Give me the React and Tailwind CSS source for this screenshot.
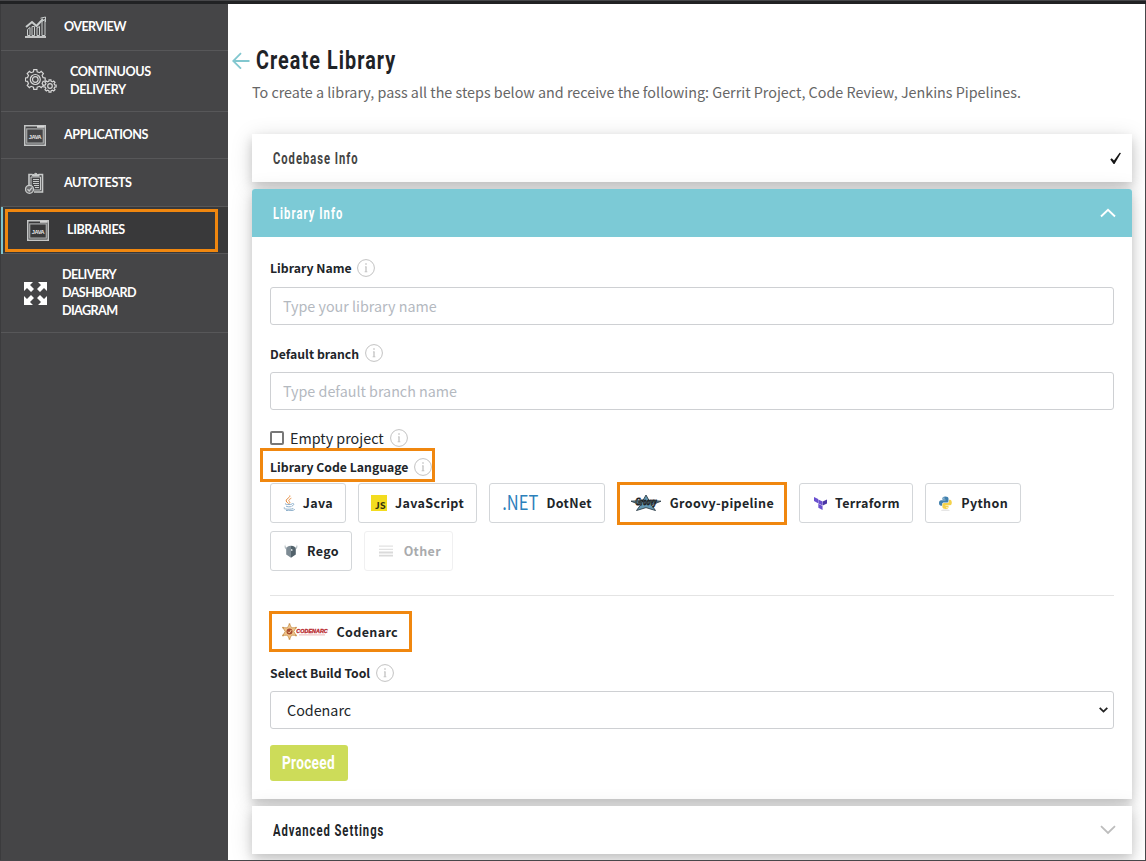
import React from "react";

const SANS = "font-['Noto_Sans_CJK_SC','Noto_Sans',sans-serif]";
const CARD = "shadow-[0_5px_10px_rgba(0,0,0,0.15),0_4px_22px_rgba(0,0,0,0.15)]";

function gearPath(cx, cy, inner, outer, teeth) {
  const pts = [];
  const step = (Math.PI * 2) / teeth;
  for (let i = 0; i < teeth; i++) {
    const a = i * step;
    [[-0.3, inner], [-0.2, outer], [0.2, outer], [0.3, inner]].forEach(([f, r]) => {
      pts.push(`${(cx + Math.cos(a + f * step) * r).toFixed(2)} ${(cy + Math.sin(a + f * step) * r).toFixed(2)}`);
    });
  }
  return `M${pts.join("L")}Z`;
}

function ChartIcon() {
  return (
    <svg width="22" height="22" viewBox="0 0 22 22" fill="none" stroke="#c9cdcd" strokeWidth="1">
      <path d="M0 21H21" strokeWidth="1.6" stroke="#e2e4e4" />
      <path d="M2.5 19.5V13.5L5 11.5V19.5ZM7 19.5V10.5L9.5 10.5V19.5ZM12 19.5V12L14.5 10.5V19.5ZM17 19.5V5.5L20 3.5V19.5Z" />
      <path d="M1 11L7 6L11.5 10L18 3" strokeWidth="2" />
      <path d="M15.5 2.2L20.5 1V6" />
    </svg>
  );
}

function GearsIcon() {
  return (
    <svg width="32" height="24" viewBox="0 0 32 24" fill="none" stroke="#d6d6d6" strokeWidth="1.2">
      <path d={gearPath(10.3, 10.5, 8, 10, 8)} />
      <circle cx="10.3" cy="10.5" r="5" />
      <circle cx="10.3" cy="10.5" r="2.8" />
      <path d={gearPath(25, 17, 4.8, 6.2, 8)} />
      <circle cx="25" cy="17" r="2.3" />
    </svg>
  );
}

function JavaWindowIcon() {
  return (
    <svg width="22" height="21" viewBox="0 0 22 21">
      <rect x="0.75" y="0.75" width="20.5" height="19.5" fill="none" stroke="#c4c6c6" strokeWidth="1.5" />
      <path d="M13 1.8H20.5" stroke="#d6d6d6" strokeWidth="2" />
      <rect x="2.7" y="3.9" width="16.6" height="14.2" fill="none" stroke="#a9abab" strokeWidth="1.2" />
      <text x="11" y="14" textAnchor="middle" fontSize="5.6" fontWeight="700" fontFamily="Liberation Sans" fill="#e4e4e4">JAVA</text>
    </svg>
  );
}

function ClipboardIcon() {
  return (
    <svg width="19" height="22" viewBox="0 0 19 22" fill="none" stroke="#c8caca">
      <path d="M7.5 2.5H4V14M13.5 2.5H17.5V20H9" strokeWidth="1.6" />
      <path d="M6 17V5H15.5V18H9" />
      <path d="M7.5 4V2.5H9.2A1.6 1.6 0 0 1 12.3 2.5H14V4Z" fill="#c8caca" />
      <path d="M8 7.5H14M8 9.5H14M8 11.5H14M9 13.5H14M10 15.5H14" />
      <circle cx="4.5" cy="17.3" r="4" fill="#69696b" strokeWidth="1.3" />
      <path d="M2.5 17.3L4.2 18.9L7 15.6" strokeWidth="1.4" />
    </svg>
  );
}

function ExpandIcon() {
  return (
    <svg width="23" height="23" viewBox="0 0 23 23" fill="#fff">
      <path d="M0 0H9L6 3L10 7L7 10L3 6L0 9ZM23 0V9L20 6L16 10L13 7L17 3L14 0ZM0 23V14L3 17L7 13L10 16L6 20L9 23ZM23 23H14L17 20L13 16L16 13L20 17L23 14Z" />
    </svg>
  );
}

function Info({ className = "" }) {
  return (
    <svg className={`shrink-0 ${className}`} width="18" height="18" viewBox="0 0 18 18" fill="none" stroke="#c2c2c2">
      <circle cx="9" cy="9" r="8.4" strokeWidth="1" />
      <path d="M9 7.5V13" strokeWidth="1.3" />
      <path d="M8.2 7.8H9.3M7.6 12.8H10.4" strokeWidth="0.8" />
      <path d="M8.3 5H9.7" strokeWidth="1.4" />
    </svg>
  );
}

function JavaLogo() {
  return (
    <svg width="12" height="16" viewBox="0 0 12 16" fill="none">
      <path d="M6.8 0.5C8 3-1 4.5 5.6 8.5M8.3 3.2C5.5 4.8 5.2 5.5 6.5 6.8C7.3 7.7 6.5 8.2 6 8.6" stroke="#e58a3c" />
      <path d="M2.8 8.5C0.5 9.5 7 10 9 9M9.3 8.5C11.5 8 11 10.5 9 11M3 11C3.5 12 7.5 12 8.5 11.4M1.5 12.5C-1.5 14 7 15 10.3 13.5M3 15.4C6 16 10.5 15.8 11.8 14.4" stroke="#7fa5c4" strokeWidth="0.9" />
    </svg>
  );
}

function JsLogo() {
  return (
    <svg width="16" height="16" viewBox="0 0 16 16">
      <path d="M0 0H16V16H0Z" fill="#f3dc1f" />
      <text x="4.3" y="14.4" fontSize="9.8" fontWeight="900" textLength="10.7" lengthAdjust="spacingAndGlyphs" fontFamily="Lato" fill="#35340f">JS</text>
    </svg>
  );
}

function DotNetLogo() {
  return (
    <svg className="overflow-visible" width="37" height="20" viewBox="0 0 37 20">
      <text x="0.3" y="16.7" fontSize="19.5" fontWeight="400" letterSpacing="0" textLength="36" lengthAdjust="spacingAndGlyphs" fontFamily="Noto Sans CJK SC" fill="#2b80bb">.NET</text>
    </svg>
  );
}

function GroovyLogo() {
  return (
    <svg className="overflow-visible" width="30" height="16" viewBox="0 0 30 16">
      <path d="M15 0L18 5.4L30 6.2L20.5 10L24.5 15.5L15 12.6L5.5 15.5L9.5 10L0 6.2L12 5.4Z" fill="#6398b3" stroke="#2f3d46" strokeWidth="0.9" />
      <text x="4.5" y="10" fontSize="10" fontWeight="700" fontStyle="italic" letterSpacing="0" textLength="21" lengthAdjust="spacingAndGlyphs" fontFamily="Liberation Serif" fill="#a9c3cf" stroke="#1d2327" strokeWidth="1">Groovy</text>
    </svg>
  );
}

function TerraformLogo() {
  return (
    <svg width="13" height="13" viewBox="0 0 12 13" preserveAspectRatio="none">
      <path d="M0 0L3.8 2.1V6.2L0 4Z" fill="#6a50cf" />
      <path d="M4 2.4L7.9 4.5V8.6L4 6.4Z" fill="#6a50cf" />
      <path d="M8.1 4.5L12 2.4V6.4L8.1 8.6Z" fill="#4b36a5" />
      <path d="M4 6.7L7.9 8.9V13L4 10.8Z" fill="#6a50cf" />
    </svg>
  );
}

function PythonLogo() {
  return (
    <svg width="13" height="15" viewBox="0 0 13 15">
      <path d="M6.3 0.5C4 0.5 3.4 1.5 3.4 2.6V3.7H6.5V4.3H2.1C0.8 4.3 0 5.4 0 7.1S0.9 9.8 2 9.8H3.1V8.3C3.1 7.1 4 6.5 5 6.5H8C9 6.5 9.5 5.7 9.5 4.9V2.6C9.5 1.2 8.4 0.5 6.3 0.5Z" fill="#4080ae" />
      <path d="M6.7 13C9 13 9.5 12 9.5 11V9.8H6.4V9.2H11C12.3 9.2 12.8 8 12.8 6.5S12 3.8 11 3.8H10V5.2C10 6.4 9 7 8 7H5C4 7 3.4 7.8 3.4 8.6V11C3.4 12.3 4.6 13 6.7 13Z" fill="#f4d24b" />
      <circle cx="4.9" cy="2.1" r="0.6" fill="#fff" />
      <circle cx="8" cy="11.4" r="0.6" fill="#fff" />
      <ellipse cx="6.4" cy="14.2" rx="4.5" ry="0.6" fill="#dedede" />
    </svg>
  );
}

function RegoLogo() {
  return (
    <svg width="14" height="14" viewBox="0 0 14 14">
      <path d="M1.2 0.5C0.2 2 0.2 4.2 2.3 5.6L3.5 3.7C1.8 3.2 1.1 2 1.2 0.5ZM12.8 0.5C13.8 2 13.8 4.2 11.7 5.6L10.5 3.7C12.2 3.2 12.9 2 12.8 0.5Z" fill="#b9c1c5" />
      <path d="M7 1.7C4 1.7 2.2 3 2.2 5.6V10.6L7 13.8Z" fill="#7d8b94" />
      <path d="M7 1.7C10 1.7 11.8 3 11.8 5.6V10.6L7 13.8Z" fill="#52626b" />
      <path d="M7 5L8.4 5.3V7L7 6.7Z" fill="#dfe5e7" />
    </svg>
  );
}

function OtherLogo() {
  return (
    <svg width="14" height="13" viewBox="0 0 14 13">
      <path d="M0 1.2H14M0 4.4H14" stroke="#e2e2e2" strokeWidth="1.2" />
      <path d="M0 7.5H14M0 10.6H14" stroke="#dadada" strokeWidth="1.8" />
    </svg>
  );
}

function CodenarcLogo() {
  return (
    <svg className="overflow-visible" width="48" height="17" viewBox="0 0 48 17">
      <path d="M7.5 1L9.6 4.8L14 4.7L11.8 8.5L14 12.3L9.6 12.2L7.5 16L5.4 12.2L1 12.3L3.2 8.5L1 4.7L5.4 4.8Z" fill="#efc58c" stroke="#c9924e" strokeWidth="0.8" />
      <g fill="#c9924e">
        <circle cx="7.5" cy="1.1" r="0.9" />
        <circle cx="1" cy="4.6" r="0.9" />
        <circle cx="1" cy="12.4" r="0.9" />
        <circle cx="14" cy="4.6" r="0.9" />
        <circle cx="14" cy="12.4" r="0.9" />
        <circle cx="7.5" cy="15.9" r="0.9" />
      </g>
      <circle cx="7.5" cy="8.5" r="3" fill="#a64a2e" />
      <path d="M6 8.6L7.3 10L9.3 7" fill="none" stroke="#f1cf9a" />
      <text x="14.3" y="10.2" fontSize="5.6" fontWeight="700" fontStyle="italic" letterSpacing="0" textLength="31.5" lengthAdjust="spacingAndGlyphs" fontFamily="Liberation Sans" fill="#b8272c" stroke="#b8272c" strokeWidth="0.3">CODENARC</text>
      <path d="M17 11.9H43" stroke="#e9a3a3" strokeWidth="0.8" />
    </svg>
  );
}

function NavItem({ icon, label, className }) {
  return (
    <div className={`flex w-full items-center border-b border-[#575759] ${className}`}>
      {icon}
      <div className="whitespace-pre-line">{label}</div>
    </div>
  );
}

function Heading({ children, className }) {
  return (
    <span className={`inline-block origin-left whitespace-nowrap font-['Roboto',sans-serif] font-bold ${className}`}>{children}</span>
  );
}

function Tile({ icon, label, className }) {
  return (
    <div className={`flex h-10 items-center rounded-[3px] border border-[#d3d6d9] bg-white text-[12.5px] leading-5 font-bold tracking-[0.35px] text-[#212529] ${className}`}>
      {icon}
      <span className="-mt-px ml-auto whitespace-nowrap">{label}</span>
    </div>
  );
}

export default function App() {
  return (
    <div className={`flex h-[861px] w-[1146px] flex-col overflow-hidden border-b border-[#47474a] bg-white ${SANS}`}>
      <div className="h-1 shrink-0 border-t border-[#47474a] bg-[#212224]" />
      <div className="flex min-h-0 grow">
        <aside className="w-[228px] shrink-0 border-l border-[#3b3b3d] bg-[#454547] font-['Lato',sans-serif] text-[12.6px] leading-[18px] font-bold tracking-[-0.6px] text-white">
          <NavItem className="h-[47px] gap-[17px] pl-6" icon={<ChartIcon />} label="OVERVIEW" />
          <NavItem className="h-[61px] gap-[13px] pl-6 tracking-[-0.4px]" icon={<GearsIcon />} label={"CONTINUOUS\nDELIVERY"} />
          <NavItem className="h-[47px] gap-[18px] pl-[23px] tracking-[-0.4px]" icon={<JavaWindowIcon />} label="APPLICATIONS" />
          <NavItem className="h-12 gap-[20px] pl-[24px] tracking-[-0.4px]" icon={<ClipboardIcon />} label="AUTOTESTS" />
          <div className="relative">
            <NavItem className="h-[47px] gap-[18px] bg-[#39393a] pl-[26px] tracking-[-0.4px]" icon={<JavaWindowIcon />} label="LIBRARIES" />
            <div className="absolute top-0 left-0 h-[47px] w-[2px] bg-[#7fc5ce]" />
            <div className="absolute top-[2px] left-1 h-[43px] w-[213px] border-3 border-[#f0870f]" />
          </div>
          <NavItem className="h-[79px] gap-[15px] pl-[23px]" icon={<ExpandIcon />} label={"DELIVERY\nDASHBOARD\nDIAGRAM"} />
        </aside>

        <main className="flex w-[918px] shrink-0 flex-col overflow-hidden border-r border-[#47474a] pr-[13px] pl-6">
          <div className="-ml-5 mt-[38px] flex h-9 items-center">
            <svg width="18" height="18" viewBox="0 0 18 18" fill="none" stroke="#82c7cf" strokeWidth="1.8">
              <path d="M17.5 10H1.5M9 2.2L1.2 10L9 17.7" />
            </svg>
            <Heading className="ml-[6px] scale-x-[0.76] text-[26px] leading-9 tracking-[1.4px] text-[#1f2327]">Create Library</Heading>
          </div>
          <p className="mt-[2px] h-6 text-[14.33px] leading-6 whitespace-nowrap text-[#666]">
            To create a library, pass all the steps below and receive the following: Gerrit Project, Code Review, Jenkins Pipelines.
          </p>

          <section className={`mt-[30px] flex h-12 shrink-0 items-center justify-between bg-white pr-[10px] pl-[21px] ${CARD}`}>
            <Heading className="mt-[2px] scale-x-[0.7] text-[16px] leading-5 tracking-[1.4px] text-[#444]">Codebase Info</Heading>
            <svg width="13" height="13" viewBox="0 0 13 13">
              <path d="M1.3 7.5L2.7 6.2L5 8.6L10.6 0.8L12 1L5.5 12H4.6Z" fill="#151515" />
            </svg>
          </section>

          <section className={`mt-[7px] flex h-[610px] shrink-0 flex-col rounded-t-[3px] bg-white ${CARD}`}>
            <div className="flex h-12 shrink-0 items-center justify-between rounded-t-[3px] bg-[#7ccad6] pr-4 pl-[21px]">
              <Heading className="mt-[2px] scale-x-[0.7] text-[16px] leading-5 tracking-[1.5px] text-white">Library Info</Heading>
              <svg width="16" height="10" viewBox="0 0 16 10" fill="none" stroke="#fff" strokeWidth="1.9">
                <path d="M1 8.5L8 1.8L15 8.5" />
              </svg>
            </div>
            <div className="flex flex-col px-[18px] pt-[21px] text-[#212529]">
              <div className="flex h-5 items-center text-[12.25px] leading-5 font-bold">
                <span className="w-[87px] whitespace-nowrap">Library Name</span>
                <Info />
              </div>
              <div className="mt-[9px] flex h-[38px] items-center rounded-[3px] border border-[#ced0d3] px-3 text-[14.32px] leading-6 text-[#b4b9bf]">Type your library name</div>
              <div className="mt-[18px] flex h-5 items-center text-[12.25px] leading-5 font-bold">
                <span className="mt-[2px] w-[95px] whitespace-nowrap">Default branch</span>
                <Info />
              </div>
              <div className="mt-[9px] flex h-[38px] items-center rounded-[3px] border border-[#ced0d3] px-3 text-[14.32px] leading-6 text-[#b4b9bf]">Type default branch name</div>
              <div className="mt-[18px] flex h-5 items-center text-[14.32px]">
                <div className="mr-[6px] size-[14px] rounded-[2px] border-2 border-[#777]" />
                <span className="w-[100px] leading-5 whitespace-nowrap">Empty project</span>
                <Info />
              </div>
              <div className="relative mt-[9px] flex h-5 items-center text-[12.25px] leading-5 font-bold">
                <span className="w-[144px] whitespace-nowrap">Library Code Language</span>
                <Info />
                <div className="absolute -top-[9px] -left-[10px] h-[34px] w-[175px] border-3 border-[#f0870f]" />
              </div>
              <div className="mt-[6px] flex flex-wrap gap-x-3 gap-y-2">
                <Tile className="w-[76px] px-3" icon={<JavaLogo />} label="Java" />
                <Tile className="w-[119px] px-3" icon={<JsLogo />} label="JavaScript" />
                <Tile className="w-[116px] px-3" icon={<DotNetLogo />} label="DotNet" />
                <div className="relative w-[170px]">
                  <Tile className="w-[170px] pr-3 pl-[13px]" icon={<GroovyLogo />} label="Groovy-pipeline" />
                  <div className="absolute -top-[1px] left-0 h-[43px] w-[170px] border-3 border-[#f0870f]" />
                </div>
                <Tile className="w-[114px] pr-3 pl-[14px]" icon={<TerraformLogo />} label="Terraform" />
                <Tile className="w-[96px] pr-3 pl-[13px]" icon={<PythonLogo />} label="Python" />
                <Tile className="w-[82px] pr-3 pl-[13px]" icon={<RegoLogo />} label="Rego" />
                <Tile className="w-[89px] border-[#f0f0f1] pr-[11px] pl-[14px] !text-[#a9abad]" icon={<OtherLogo />} label="Other" />
              </div>
              <div className="mt-6 h-px bg-[#e4e4e4]" />
              <div className="mt-[15px] -ml-px flex h-[41px] w-[143px] items-center border-3 border-[#f0870f] pr-[11px] pl-[10px] text-[12.5px] leading-5 font-bold tracking-[0.35px]">
                <CodenarcLogo />
                <span className="ml-auto whitespace-nowrap">Codenarc</span>
              </div>
              <div className="mt-[11px] flex h-5 items-center text-[12.25px] leading-5 font-bold">
                <span className="w-[106px] whitespace-nowrap">Select Build Tool</span>
                <Info />
              </div>
              <div className="mt-2 flex h-[38px] items-center justify-between rounded-[3px] border border-[#ced0d3] pr-[5px] pl-4 text-[14.32px] leading-6">
                <span>Codenarc</span>
                <svg width="9" height="6" viewBox="0 0 9 6" fill="none" stroke="#222" strokeWidth="1.8">
                  <path d="M0.7 0.8L4.5 4.6L8.3 0.8" />
                </svg>
              </div>
              <div className="mt-4 flex h-9 w-[78px] items-center rounded-[3px] bg-[#cddc59] pl-3">
                <Heading className="w-0 scale-x-[0.72] text-[19px] leading-6 tracking-[0.4px] text-white">Proceed</Heading>
              </div>
            </div>
          </section>

          <section className={`mt-[7px] flex h-12 shrink-0 items-center justify-between bg-white pr-4 pl-[21px] ${CARD}`}>
            <Heading className="mt-[2px] scale-x-[0.7] text-[16px] leading-5 tracking-[1.4px] text-[#212529]">Advanced Settings</Heading>
            <svg width="16" height="10" viewBox="0 0 16 10" fill="none" stroke="#bdbdbd" strokeWidth="1.8">
              <path d="M1 1.2L8 8L15 1.2" />
            </svg>
          </section>
        </main>
      </div>
    </div>
  );
}
